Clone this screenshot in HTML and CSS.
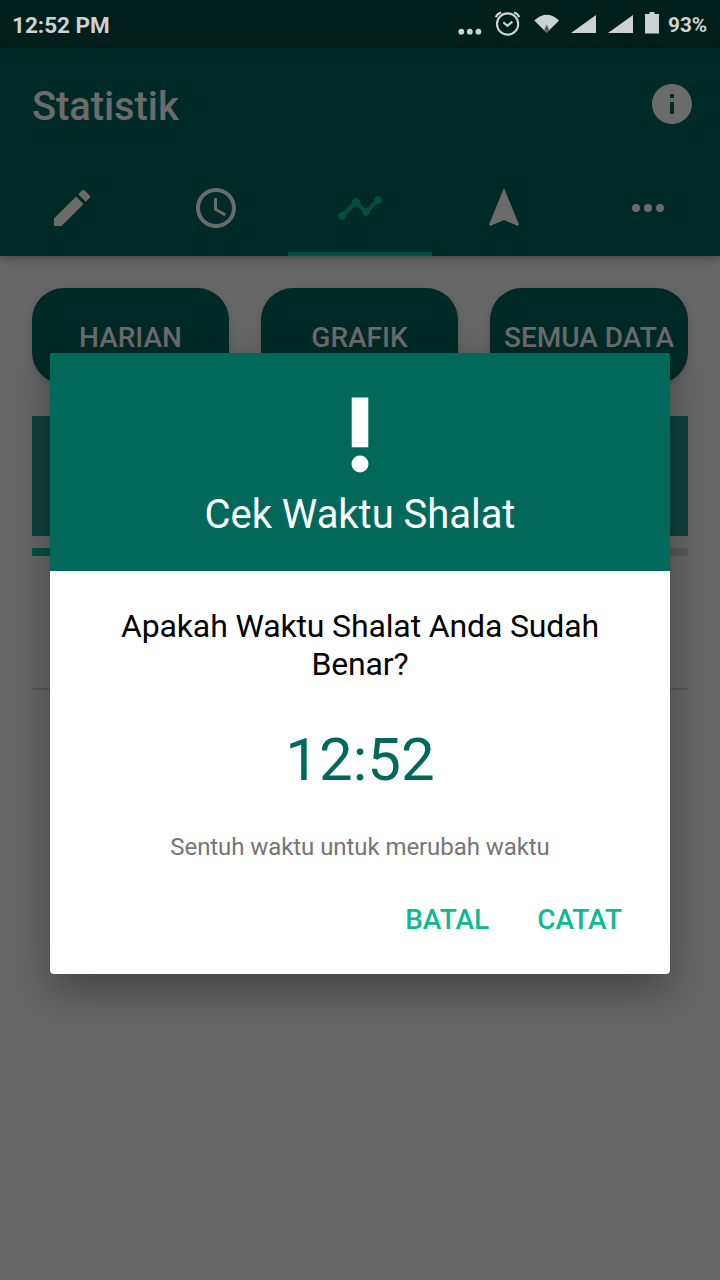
FILE: index.html
```html
<!DOCTYPE html>
<html lang="id">
<head>
<meta charset="utf-8">
<title>Statistik</title>
<link rel="stylesheet" href="styles.css">
</head>
<body>
<div class="screen">
  <div class="statusbar">
    <span class="clock">12:52 PM</span>
    <div class="indicators">
      <svg class="dots" width="24" height="48" viewBox="0 0 24 48"><circle cx="3.3" cy="31.700" r="2.900"/><circle cx="11.800" cy="31.700" r="2.900"/><circle cx="20.400" cy="31.700" r="2.900"/></svg>
      <svg class="alarm" width="26" height="48" viewBox="0 0 26 48"><g class="line"><circle cx="12.600" cy="24" r="10.600"/><path d="M8.300 22.300l4.100 3.500 5-4.200M.9 17.200q1.300-3.600 5.300-4.600M24.300 17.200q-1.300-3.600-5.300-4.600"/></g></svg>
      <svg class="wifi" width="26" height="48" viewBox="0 0 26 48"><path d="M0.300 20.500Q12.700 9 25.100 20.500L12.700 32.800z"/><path class="mark" d="M12.700 24.500l2.400 5.200-2.400 3.300-2.400-3.300z"/></svg>
      <svg class="signal" width="25" height="48" viewBox="0 0 25 48"><path d="M0 33L25 15v18z"/></svg>
      <svg class="signal second" width="25" height="48" viewBox="0 0 25 48"><path d="M0 33L25 15v18z"/></svg>
      <svg class="battery" width="14" height="48" viewBox="0 0 14 48"><path d="M0 14h4.500v-2h5v2H14v19.500H0z"/></svg>
      <span class="percent">93%</span>
    </div>
  </div>

  <header class="appbar">
    <div class="titlebar">
      <h1 class="title">Statistik</h1>
      <svg width="48" height="48" viewBox="0 0 24 24"><path d="M12 2C6.480 2 2 6.480 2 12s4.480 10 10 10 10-4.480 10-10S17.520 2 12 2zm1 15h-2v-6h2v6zm0-8h-2V7h2v2z"/></svg>
    </div>
    <nav class="tabs">
      <div class="tab"><svg width="48" height="48" viewBox="0 0 24 24"><path d="M3 17.250V21h3.750L17.810 9.940l-3.750-3.750L3 17.250zM20.710 7.040c.39-.39.39-1.020 0-1.410l-2.340-2.340c-.39-.39-1.020-.39-1.410 0l-1.830 1.830 3.750 3.750 1.830-1.830z"/></svg></div>
      <div class="tab"><svg width="48" height="48" viewBox="0 0 24 24"><path d="M11.990 2C6.470 2 2 6.480 2 12s4.470 10 9.990 10C17.520 22 22 17.520 22 12S17.520 2 11.990 2zM12 20c-4.420 0-8-3.580-8-8s3.580-8 8-8 8 3.580 8 8-3.580 8-8 8zm.5-13H11v6l5.250 3.150.75-1.230-4.500-2.670z"/></svg></div>
      <div class="tab active"><svg width="48" height="48" viewBox="0 0 24 24"><path d="M23 8c0 1.100-.9 2-2 2-.18 0-.35-.02-.51-.07l-3.560 3.550c.05.160.070.340.070.520 0 1.100-.9 2-2 2s-2-.9-2-2c0-.18.020-.36.070-.52l-2.550-2.550c-.16.050-.34.070-.52.070s-.36-.02-.52-.07l-4.550 4.560c.05.160.070.330.070.510 0 1.100-.9 2-2 2s-2-.9-2-2 .9-2 2-2c.18 0 .35.020.51.070l4.560-4.550C8.020 9.360 8 9.180 8 9c0-1.100.9-2 2-2s2 .9 2 2c0 .18-.02.360-.07.520l2.550 2.550c.16-.05.340-.07.520-.07s.36.020.52.070l3.550-3.560C19.020 8.350 19 8.180 19 8c0-1.100.9-2 2-2s2 .9 2 2z"/></svg></div>
      <div class="tab"><svg width="48" height="48" viewBox="0 0 24 24"><path d="M12 2L4.500 20.290l.71.710L12 18l6.790 3 .71-.71z"/></svg></div>
      <div class="tab"><svg width="48" height="48" viewBox="0 0 24 24"><circle cx="6" cy="12" r="2"/><circle cx="12" cy="12" r="2"/><circle cx="18" cy="12" r="2"/></svg></div>
    </nav>
  </header>

  <main class="content">
    <div class="buttons">
      <div class="pill">HARIAN</div>
      <div class="pill">GRAFIK</div>
      <div class="pill">SEMUA DATA</div>
    </div>
    <div class="panel"></div>
    <div class="progress"><div class="progress-fill"></div></div>
    <div class="divider"></div>
  </main>

  <section class="dialog">
    <div class="dialog-head">
      <svg class="exclaim" width="18" height="76" viewBox="0 0 18 76"><path d="M.7 .5h16.600v49.800H.7z"/><circle cx="9" cy="67" r="8.500"/></svg>
      <h2 class="dialog-title">Cek Waktu Shalat</h2>
    </div>
    <div class="dialog-body">
      <p class="question">Apakah Waktu Shalat Anda Sudah Benar?</p>
      <div class="time">12:52</div>
      <p class="hint">Sentuh waktu untuk merubah waktu</p>
      <div class="actions"><span>BATAL</span><span>CATAT</span></div>
    </div>
  </section>
</div>
</body>
</html>
```
FILE: styles.css
```css
* { box-sizing: border-box; }
body { margin: 0; font-family: Roboto, "Liberation Sans", sans-serif; }
h1, h2, p { margin: 0; font-weight: 400; }
svg { display: block; flex: none; fill: currentColor; }

.screen {
  position: relative;
  width: 720px;
  height: 1280px;
  overflow: hidden;
  background: #666;
}

.statusbar {
  display: flex;
  justify-content: space-between;
  height: 48px;
  padding: 0 13px 0 12px;
  background: #001f1a;
  color: #ccd2d1;
  font-size: 22.500px;
  font-weight: 700;
  line-height: 50px;
}
.indicators { display: flex; }
.alarm { margin-left: 13px; }
.line { fill: none; stroke: currentColor; stroke-width: 2.100; }
.wifi { margin-left: 13px; }
.mark { fill: #55605d; }
.signal { margin-left: 11px; }
.second { margin-left: 12px; }
.battery { margin-left: 12px; }
.percent { width: 39px; margin-left: 9px; font-size: 20.800px; white-space: nowrap; }

.appbar {
  position: relative;
  height: 208px;
  background: #002a25;
  color: #6b6b6b;
  box-shadow: 0 2px 9px rgba(0, 0, 0, .32);
}
.titlebar {
  display: flex;
  align-items: center;
  justify-content: space-between;
  height: 112px;
  padding: 0 24px 0 32px;
}
.title { padding-top: 5px; font-size: 40px; font-weight: 500; letter-spacing: -.1px; line-height: 48px; }
.tabs { display: grid; grid-template-columns: repeat(5, 1fr); height: 96px; }
.tab { display: flex; align-items: center; justify-content: center; }
.active { color: #005040; box-shadow: inset 0 -4px #005040; }

.content { padding: 32px; }
.buttons { display: grid; grid-template-columns: 197px 197px 198px; gap: 32px; }
.pill {
  height: 96px;
  border-radius: 32px;
  background: #002a25;
  box-shadow: 0 3px 7px rgba(0, 0, 0, .16);
  color: #6b6b6b;
  font-size: 28px;
  font-weight: 500;
  line-height: 100px;
  text-align: center;
  white-space: nowrap;
}
.panel { height: 120px; margin-top: 32px; background: #10423d; }
.progress { height: 8px; margin-top: 12px; background: #585858; }
.progress-fill { width: 30%; height: 8px; background: #005040; }
.divider { height: 2px; margin-top: 132px; background: #575757; }

.dialog {
  position: absolute;
  top: 353px;
  left: 50px;
  width: 620px;
  height: 621px;
  border-radius: 4px;
  background: #fff;
  box-shadow: 0 16px 40px rgba(0, 0, 0, .34);
  text-align: center;
}
.dialog-head {
  display: flex;
  flex-direction: column;
  align-items: center;
  height: 218px;
  padding-top: 44px;
  border-radius: 3px 3px 0 0;
  background: #00695c;
  color: #fff;
}
.dialog-title { margin-top: 18px; font-size: 40px; letter-spacing: -.04px; line-height: 48px; }
.dialog-body { padding: 36px 48px 0; }
.question { padding: 0 16px; color: #000; font-size: 32px; letter-spacing: -.14px; line-height: 38px; }
.time { margin-top: 41px; color: #00695c; font-size: 60px; line-height: 72px; }
.hint { margin-top: 36px; color: #757575; font-size: 24px; letter-spacing: -.07px; line-height: 30px; }
.actions {
  display: flex;
  justify-content: flex-end;
  gap: 48px;
  margin-top: 41px;
  color: #10b993;
  font-size: 28px;
  font-weight: 500;
  line-height: 34px;
}
```
